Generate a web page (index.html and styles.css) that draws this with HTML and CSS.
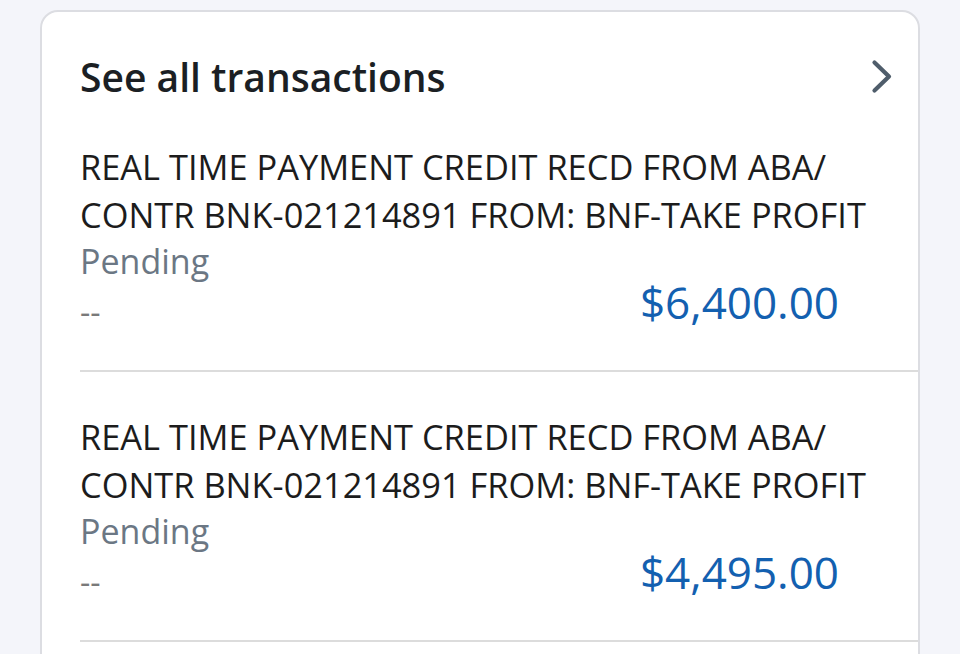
FILE: index.html
```html
<!DOCTYPE html>
<html>
<head>
<meta charset="utf-8">
<link rel="stylesheet" href="styles.css">
</head>
<body>
<div class="card">
  <div class="header">
    <h2 class="title">See all transactions</h2>
    <svg class="chev" width="24" height="36" viewBox="0 0 24 36"><path d="M4.5 3.5 L19 17.5 L4.5 31.5" fill="none" stroke="#4f5d6b" stroke-width="4.2" stroke-linecap="round" stroke-linejoin="round"/></svg>
  </div>
  <div class="txn">
    <div class="desc">REAL TIME PAYMENT CREDIT RECD FROM ABA/<br>CONTR BNK-021214891 FROM: BNF-TAKE PROFIT</div>
    <div class="status">Pending</div>
    <div class="bottom">
      <span class="dash">--</span>
      <span class="amount">$6,400.00</span>
    </div>
  </div>
  <div class="txn">
    <div class="desc">REAL TIME PAYMENT CREDIT RECD FROM ABA/<br>CONTR BNK-021214891 FROM: BNF-TAKE PROFIT</div>
    <div class="status">Pending</div>
    <div class="bottom">
      <span class="dash">--</span>
      <span class="amount">$4,495.00</span>
    </div>
  </div>
</div>
</body>
</html>
```
FILE: styles.css
```css
html, body {
  margin: 0;
  padding: 0;
  background: #f4f5fa;
  font-family: "Open Sans", "Noto Sans", sans-serif;
  height: 654px;
  overflow: hidden;
}
.card {
  margin: 10px 40px 0 40px;
  background: #fff;
  border: 2px solid #dcdde2;
  border-radius: 18px;
  padding-left: 38px;
  height: 700px;
}
.header {
  display: flex;
  align-items: center;
  justify-content: space-between;
  height: 90px;
  padding: 41px 24px 1px 0;
  box-sizing: border-box;
}
.title {
  margin: 0;
  font-size: 39px;
  line-height: 48px;
  font-weight: 600;
  color: #1b1f24;
  letter-spacing: 0;
}
.chev {
  display: block;
}
.txn {
  border-bottom: 2px solid #dcdcdc;
  padding: 41px 0 49px 0;
}
.desc {
  font-size: 34.4px;
  line-height: 48px;
  color: #1c1c1c;
}
.status {
  font-size: 34px;
  line-height: 44px;
  color: #6b7784;
}
.bottom {
  display: flex;
  justify-content: space-between;
  align-items: flex-start;
  height: 38px;
  padding-right: 79px;
}
.dash {
  color: #7a7a7a;
  font-size: 32px;
  line-height: 38px;
  padding-top: 10px;
}
.amount {
  font-size: 44px;
  line-height: 38px;
  color: #1360b0;
}
```
